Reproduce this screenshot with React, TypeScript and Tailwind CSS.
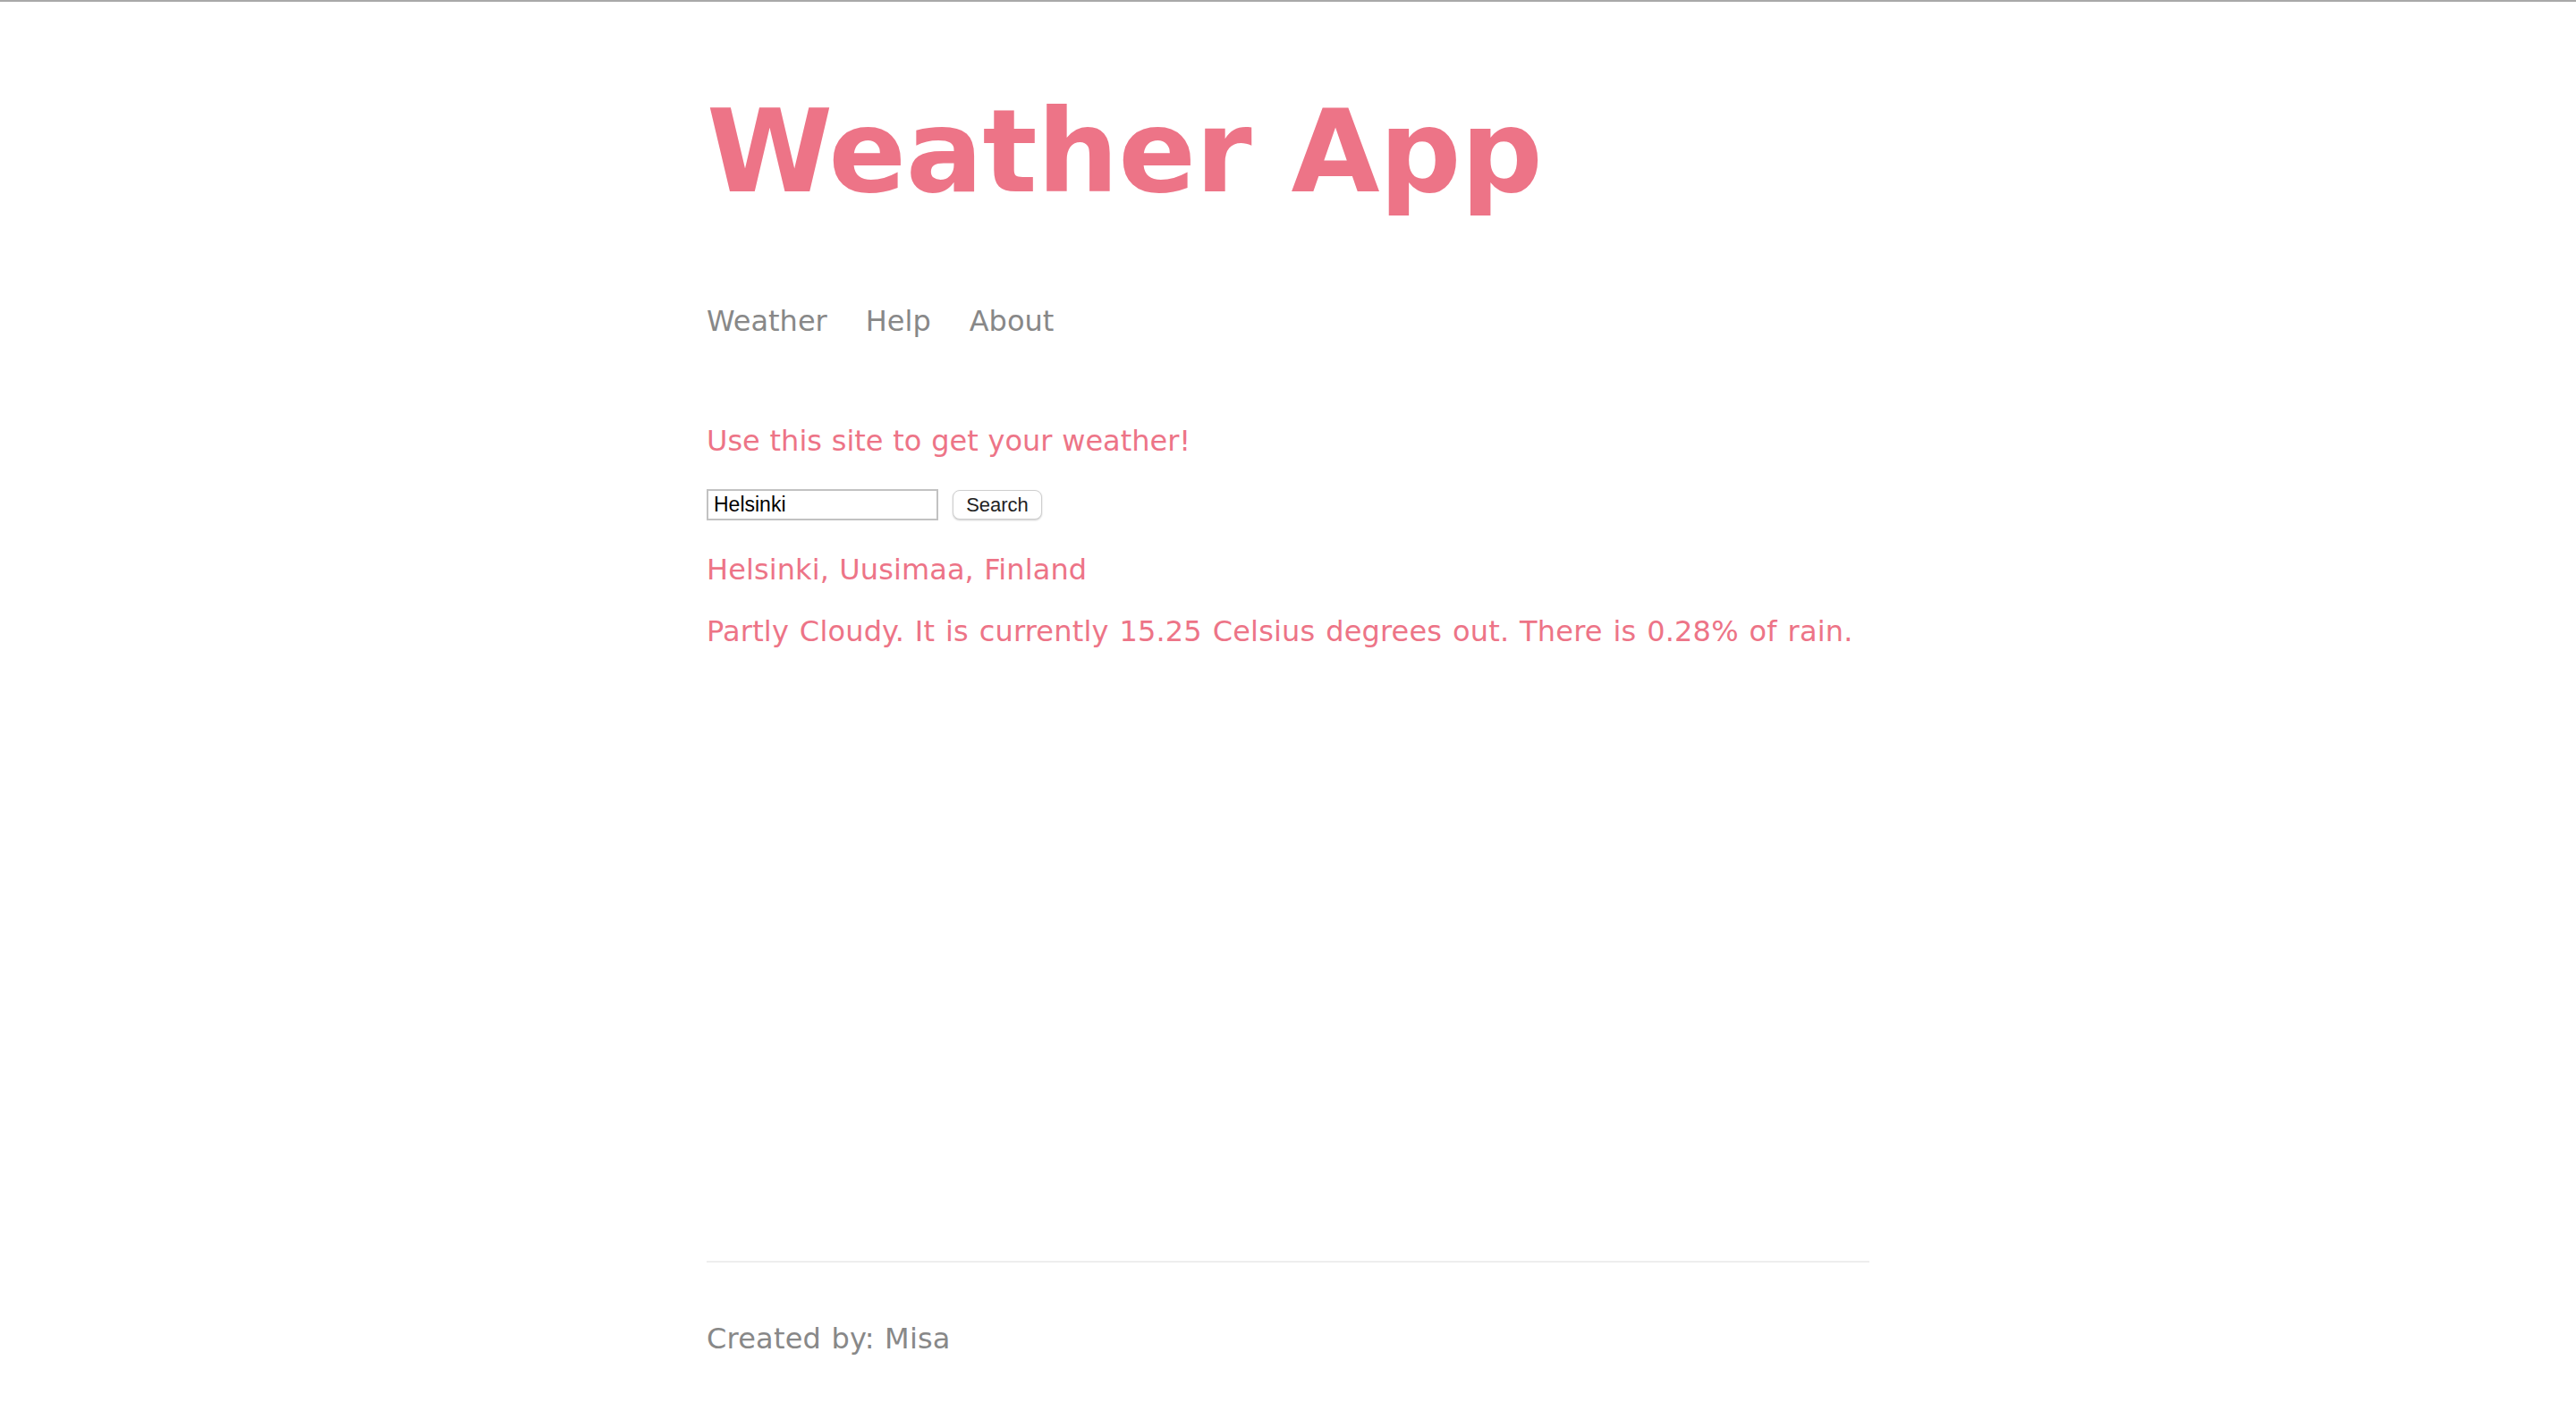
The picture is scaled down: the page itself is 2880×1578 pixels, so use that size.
import React from "react";

export default function App() {
  const verdana = { fontFamily: '"DejaVu Sans", Verdana, sans-serif' };
  return (
    <div className="bg-white min-h-[1578px] w-full" style={verdana}>
      <div className="h-[2px] w-full bg-[#a9a9a9]" />
      <div className="w-[1300px] mx-auto min-h-[1576px] flex flex-col">
        <main className="flex-grow">
          <header className="pt-[104px]">
            <h1 className="text-[128px] leading-[128px] font-bold tracking-[-0.4px] text-[#ed7487] m-0">
              Weather App
            </h1>
            <nav className="mt-[109px] flex gap-[43px] text-[32px] leading-[32px] text-[#888888]">
              <a href="#">Weather</a>
              <a href="#">Help</a>
              <a href="#">About</a>
            </nav>
          </header>
          <p className="mt-[102px] text-[32px] leading-[32px] [word-spacing:0.6px] text-[#ed7487]">
            Use this site to get your weather!
          </p>
          <form
            className="mt-[38px] flex items-center gap-[16px]"
            onSubmit={(e) => e.preventDefault()}
          >
            <input
              defaultValue="Helsinki"
              className="w-[259px] h-[35px] border-2 border-[#c2c2c2] px-[6px] text-[23px] text-black outline-none"
              style={{ fontFamily: '"Liberation Sans", Arial, sans-serif' }}
            />
            <button
              type="submit"
              className="w-[100px] h-[33px] rounded-[8px] border border-[#cfcfcf] bg-white shadow-[0_1px_2px_rgba(0,0,0,0.2)] text-[22px] leading-[22px] text-[#222222]"
              style={{ fontFamily: '"Liberation Sans", Arial, sans-serif' }}
            >
              Search
            </button>
          </form>
          <p className="mt-[39px] text-[32px] leading-[32px] tracking-[0.1px] [word-spacing:1px] text-[#ed7487]">
            Helsinki, Uusimaa, Finland
          </p>
          <p className="mt-[37px] text-[32px] leading-[32px] tracking-[0.17px] [word-spacing:1.5px] text-[#ed7487]">
            Partly Cloudy. It is currently 15.25 Celsius degrees out. There is
            0.28% of rain.
          </p>
        </main>
        <footer className="border-t-2 border-[#eeeeee] pt-[69px] pb-[65px] text-[32px] leading-[32px] tracking-[0.2px] [word-spacing:1px] text-[#888888]">
          Created by: Misa
        </footer>
      </div>
    </div>
  );
}
